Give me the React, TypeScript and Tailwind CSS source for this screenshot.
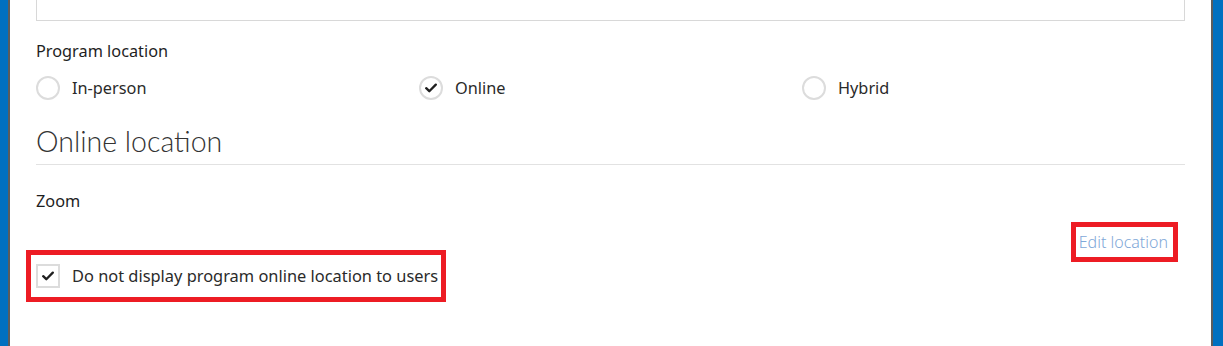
import React from 'react'

const font = { fontFamily: '"Noto Sans", "Open Sans", sans-serif' }

function Check() {
    return (
        <svg width="12" height="10" viewBox="0 0 12 10" fill="none">
            <polyline points="1.2,5.2 4.3,8.2 10.8,1.6" stroke="#1f1f1f" strokeWidth="2.3" strokeLinecap="round" strokeLinejoin="round" />
        </svg>
    )
}

function Radio({ label, checked }: { label: string; checked?: boolean }) {
    return (
        <label className="flex items-center gap-3 h-6">
            <span className="w-6 h-6 rounded-full border-2 border-[#dcdcdc] flex items-center justify-center bg-white">
                {checked && <Check />}
            </span>
            <span className="text-[16.3px] text-[#2a2a2a]">{label}</span>
        </label>
    )
}

export default function App() {
    return (
        <div className="h-[346px] w-full flex bg-white overflow-hidden" style={font}>
            <div className="w-[8px] bg-[#0070c0]" />
            <div className="w-[2px] bg-[#5c5c5c]" />

            <main className="flex-1 px-[26px]">
                {/* tail of the field above */}
                <div className="h-[21px] border-x border-b border-[#d8d8d8]" />

                <p className="mt-[18px] text-[16.3px] leading-6 text-[#1e1e1e]">Program location</p>

                <div className="mt-[13px] grid grid-cols-3">
                    <Radio label="In-person" />
                    <Radio label="Online" checked />
                    <Radio label="Hybrid" />
                </div>

                {/* Online location */}
                <h2
                    className="mt-[23px] h-[42px] leading-[36px] text-[28.5px] font-light text-[#333] border-b border-[#e2e2e2]"
                    style={{ fontFamily: 'Lato, "Noto Sans", sans-serif' }}
                >
                    Online location
                </h2>

                <p className="mt-[24px] text-[16.3px] leading-6 text-[#1e1e1e]">Zoom</p>

                <div className="mt-[9px] flex justify-end pr-[7px]">
                    <a className="border-[5px] border-[#ed1c24] pl-[3px] pr-[5px] h-[40px] flex items-center text-[16px] font-light text-[#7fa8d8]">
                        Edit location
                    </a>
                </div>

                <div className="-mt-[12px] -ml-[10px] inline-flex items-center gap-3 border-[5px] border-[#ed1c24] pl-[5px] pr-[3px] py-[9px]">
                    <span className="w-6 h-6 border-2 border-[#dcdcdc] flex items-center justify-center bg-white">
                        <Check />
                    </span>
                    <span className="text-[16.4px] leading-6 text-[#2a2a2a]">Do not display program online location to users</span>
                </div>
            </main>

            <div className="w-[2px] bg-[#5c5c5c]" />
            <div className="w-[10px] bg-[#0070c0]" />
        </div>
    )
}
